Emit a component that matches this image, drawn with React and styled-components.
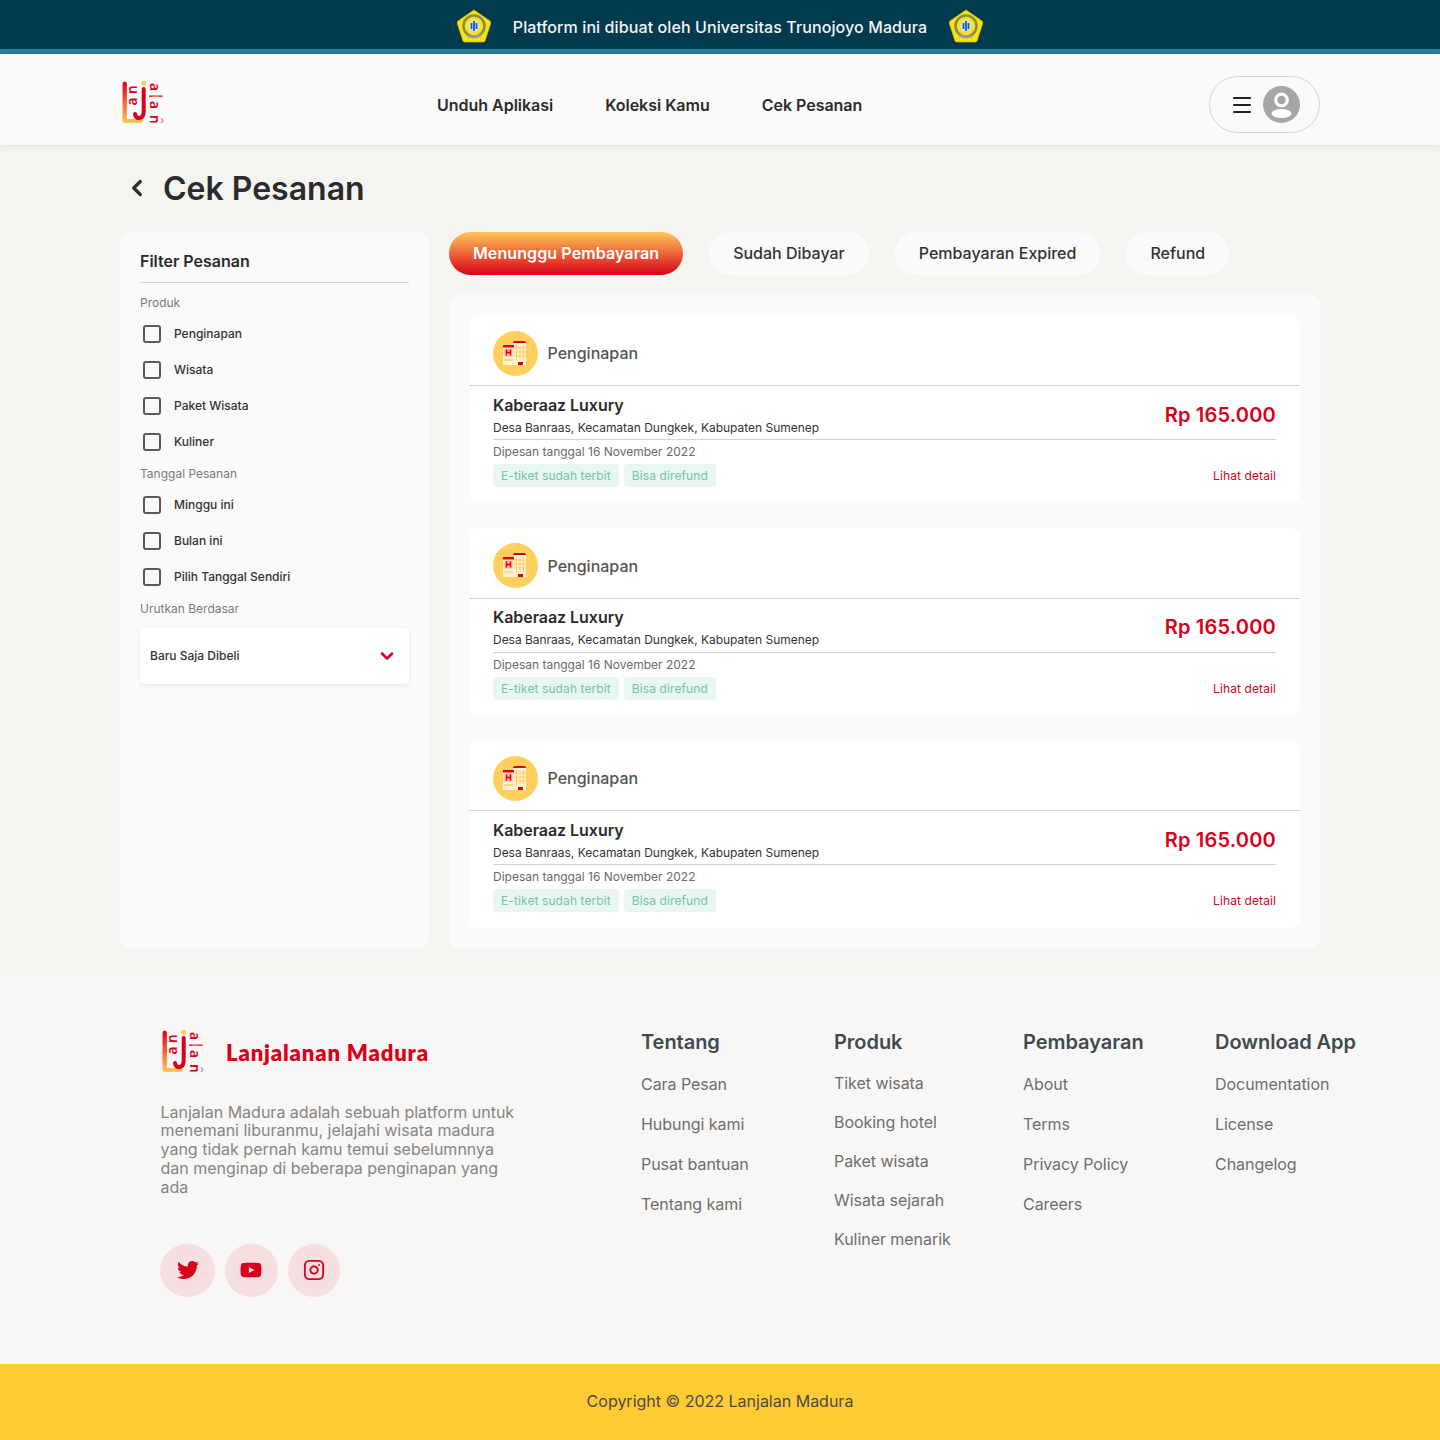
import styled, { createGlobalStyle } from 'styled-components';
import { Menu, ChevronLeft, ChevronDown } from 'lucide-react';
import { FaTwitter, FaYoutube } from 'react-icons/fa';
import { FiInstagram } from 'react-icons/fi';

const GlobalStyle = createGlobalStyle`
  * { box-sizing: border-box; }
  body {
    margin: 0;
    background: #f5f4f1;
    color: #2b2b2b;
    font-family: Inter, 'Liberation Sans', sans-serif;
  }
`;

const Banner = styled.div`
  display: flex;
  justify-content: center;
  align-items: center;
  gap: 21px;
  height: 54px;
  padding-top: 5px;
  background: #023a4e;
  border-bottom: 5px solid #22809c;
  color: #f5f5f5;
  font-size: 16px;
  font-weight: 500;
  letter-spacing: 0.1px;
`;

const Header = styled.header`
  display: flex;
  align-items: center;
  height: 91px;
  padding: 10px 120px 0;
  background: #fafafa;
  box-shadow: 0 1px 6px rgba(0, 0, 0, 0.08);
  position: relative;
`;

const LogoMark = styled.svg`
  flex: none;
  margin-top: ${(p) => p.$shift || 0}px;
`;

const Nav = styled.nav`
  display: flex;
  gap: 52px;
  margin-left: 271px;
  flex: 1;
  font-size: 16px;
  font-weight: 600;
  letter-spacing: -0.02px;
`;

const UserPill = styled.div`
  display: flex;
  align-items: center;
  gap: 9px;
  width: 111px;
  height: 57px;
  padding-left: 20px;
  border: 1px solid #d4d4d4;
  border-radius: 29px;
  color: #222;
`;

const Main = styled.main`
  padding: 24px 120px 29px;
`;

const TitleRow = styled.div`
  display: flex;
  align-items: center;
  gap: 13px;
  height: 38px;
  margin-bottom: 25px;
  padding-left: 4px;
  h1 {
    margin: 0;
    font-size: 32px;
    font-weight: 600;
  }
`;

const Columns = styled.div`
  display: grid;
  grid-template-columns: 309px 871px;
  gap: 20px;
`;

const Sidebar = styled.aside`
  height: 716px;
  padding: 19px 20px 20px;
  border-radius: 10px;
  background: #fafafa;
`;

const SideTitle = styled.h2`
  margin: 0 0 12px;
  padding-bottom: 10px;
  height: 32px;
  border-bottom: 1px solid #d4d4d4;
  font-size: 16px;
  line-height: 20px;
  font-weight: 600;
`;

const GroupLabel = styled.div`
  height: 16px;
  font-size: 12px;
  line-height: 16px;
  color: #7a7a7a;
`;

const CheckList = styled.div`
  display: flex;
  flex-direction: column;
  gap: 18px;
  margin: 13.5px 0 15.5px;
`;

const CheckRow = styled.label`
  display: flex;
  align-items: center;
  gap: 13px;
  height: 18px;
  padding-left: 3px;
  font-size: 12px;
  font-weight: 500;
  color: #333;
`;

const Box = styled.span`
  width: 18px;
  height: 18px;
  border: 2px solid #5f5753;
  border-radius: 3px;
`;

const Select = styled.div`
  display: flex;
  align-items: center;
  justify-content: space-between;
  height: 56px;
  margin-top: 10.5px;
  padding: 0 12px 0 10px;
  width: 269px;
  border-radius: 4px;
  background: #fff;
  box-shadow: 0 1px 5px rgba(0, 0, 0, 0.08);
  font-size: 12px;
  font-weight: 500;
  color: #d9001b;
  span { color: #333; }
`;

const Tabs = styled.div`
  display: flex;
  gap: 26px;
  margin-bottom: 20px;
`;

const Tab = styled.button`
  height: 43px;
  padding: 0 24px 2px;
  border: 0;
  border-radius: 22px;
  font-family: inherit;
  font-size: 16px;
  font-weight: ${(p) => (p.$active ? 600 : 500)};
  letter-spacing: ${(p) => (p.$active ? '0.1px' : '0')};
  color: ${(p) => (p.$active ? '#fff' : '#333')};
  background: ${(p) => (p.$active ? 'linear-gradient(180deg, #ffc857 0%, #d9001b 100%)' : '#fafafa')};
`;

const Panel = styled.section`
  display: flex;
  flex-direction: column;
  gap: 24.5px;
  height: 653px;
  padding: 20px;
  border-radius: 10px;
  background: #fafafa;
`;

const Card = styled.article`
  height: 188px;
  border-radius: 10px;
  background: #fff;
`;

const CardHead = styled.div`
  display: flex;
  align-items: center;
  gap: 9.5px;
  height: 71px;
  padding: 6px 24px 0;
  border-bottom: 1px solid #d4d4d4;
  font-size: 16px;
  font-weight: 500;
  color: #5a5250;
`;

const Circle = styled.div`
  display: flex;
  justify-content: center;
  align-items: center;
  width: 45px;
  height: 45px;
  border-radius: 50%;
  background: #ffd15c;
`;

const CardBody = styled.div`
  padding: 0 24px;
`;

const InfoRow = styled.div`
  display: flex;
  justify-content: space-between;
  align-items: center;
  height: 54px;
  padding-top: 4px;
  border-bottom: 1px solid #d4d4d4;
`;

const Name = styled.div`
  font-size: 16px;
  line-height: 20px;
  font-weight: 600;
  letter-spacing: -0.05px;
  margin-bottom: 5px;
`;

const Address = styled.div`
  font-size: 12px;
  line-height: 15px;
  letter-spacing: -0.02px;
  color: #333;
`;

const Price = styled.div`
  font-size: 20px;
  font-weight: 600;
  letter-spacing: 0.2px;
  color: #d9001b;
`;

const Ordered = styled.div`
  margin-top: 4px;
  font-size: 12px;
  line-height: 15px;
  color: #6a6a6a;
`;

const BadgeRow = styled.div`
  display: flex;
  align-items: center;
  gap: 5px;
  margin-top: 5px;
`;

const Badge = styled.span`
  height: 23px;
  padding: 0 8px;
  border-radius: 4px;
  background: #e9f6f2;
  color: #73c5a5;
  font-size: 12px;
  line-height: 23px;
  letter-spacing: 0.1px;
`;

const Detail = styled.a`
  margin-left: auto;
  font-size: 12px;
  letter-spacing: 0.1px;
  color: #d9001b;
`;

const Footer = styled.footer`
  display: flex;
  height: 387px;
  padding: 52px 0 0 160px;
  background: #f8f7f5;
`;

const Brand = styled.div`
  width: 481px;
`;

const BrandRow = styled.div`
  display: flex;
  align-items: center;
  gap: 20px;
  height: 46px;
  margin-bottom: 27.5px;
`;

const BrandName = styled.div`
  font-family: Lato, 'Noto Sans', sans-serif;
  font-size: 22px;
  font-weight: 800;
  letter-spacing: 0.85px;
  color: #d9001b;
`;

const About = styled.p`
  width: 360px;
  margin: 0 0 47.5px;
  padding-left: 0.5px;
  font-size: 16px;
  line-height: 18.75px;
  color: #858585;
`;

const Socials = styled.div`
  display: flex;
  gap: 10px;
`;

const Social = styled.div`
  display: flex;
  justify-content: center;
  align-items: center;
  width: ${(p) => p.$w || 52.5}px;
  height: 53px;
  border-radius: 50%;
  background: #f5dfe1;
  color: #d9001b;
  font-size: 22px;
`;

const LinkCol = styled.div`
  display: flex;
  flex-direction: column;
  width: ${(p) => p.$w}px;
  flex: none;
  gap: ${(p) => p.$gap || 21}px;
  font-size: 16px;
  line-height: 19px;
  letter-spacing: -0.05px;
  color: #6e6e6e;
  h3 {
    margin: 1px 0 0;
    height: 24px;
    font-size: 20px;
    line-height: 24px;
    font-weight: 600;
    letter-spacing: -0.04px;
    color: #3f4a4f;
    white-space: nowrap;
  }
`;

const Copy = styled.div`
  display: flex;
  justify-content: center;
  align-items: center;
  height: 76px;
  padding-bottom: 2px;
  background: #ffcb33;
  font-size: 16px;
  color: #4a4a4a;
`;

// university crest, simplified
const Crest = () => (
  <svg width="36" height="36" viewBox="0 0 36 36">
    <path d="M18 1 L34 12 Q35 13 34.500 15 L29 32 Q28.500 33 27 33 L9 33 Q7.500 33 7 32 L1.500 15 Q1 13 2 12 Z" fill="#f7e318" stroke="#d9b900" strokeWidth="0.8" />
    <circle cx="18" cy="17" r="10.500" fill="none" stroke="#8a8a4a" strokeWidth="2.500" />
    <circle cx="18" cy="17" r="6" fill="#cfe3ee" />
    <path d="M18 12 L18 22 M15.500 14 L15.500 20 M20.500 14 L20.500 20" stroke="#1d5f9a" strokeWidth="1.800" />
    <path d="M11 26 Q18 30 25 26" fill="none" stroke="#9a9a9a" strokeWidth="2.500" />
  </svg>
);

const logoFont = { fontFamily: "'Noto Sans', sans-serif", fontSize: 13.5, fontWeight: 600, fill: '#d9001b' };

const Logo = ({ id, shift }) => (
  <LogoMark width="46" height="46" viewBox="0 0 46 46" $shift={shift}>
    <defs>
      <linearGradient id={id} x1="0" y1="0" x2="0" y2="1">
        <stop offset="0" stopColor="#d9001b" />
        <stop offset="1" stopColor="#ffc857" />
      </linearGradient>
    </defs>
    <path d="M2.500 4 Q2.500 1.500 4.700 1.500 Q6.900 1.500 6.900 4 L6.900 39 L20.500 39 Q22.700 39 22.700 41 Q22.700 43 20.500 43 L5 43 Q2.500 43 2.500 40.500 Z" fill={`url(#${id})`} />
    <path d="M23.700 9 L23.700 31 Q23.700 38 19 38 Q15.500 38 15 34" fill="none" stroke="#d9001b" strokeWidth="4" strokeLinecap="round" />
    <circle cx="23.700" cy="3.300" r="2.500" fill="#ffc857" />
    <text transform="translate(17 14) rotate(-90)" {...logoFont}>n</text>
    <text transform="translate(17 25.500) rotate(-90)" {...logoFont}>a</text>
    <text transform="translate(30 3) rotate(90)" {...logoFont}>a</text>
    <rect x="29" y="15.500" width="13.500" height="1.300" fill="#d9001b" />
    <rect x="32" y="15.800" width="7" height="0.700" fill="#ffc857" />
    <text transform="translate(30 21) rotate(90)" {...logoFont}>a</text>
    <text transform="translate(30 35) rotate(90)" {...logoFont}>n</text>
    <path d="M41 38.500 L43 40.700 L41 43" fill="none" stroke="#d9001b" strokeWidth="0.800" />
  </LogoMark>
);

const Hotel = () => (
  <svg width="28" height="27" viewBox="0 0 28 27">
    <rect x="11" y="3" width="13" height="22" fill="#fff1d6" />
    <path d="M11 3 Q11 1 13 1 L22 1 Q24 1 24 3 Z" fill="#d9001b" />
    <rect x="1" y="7" width="11" height="18" fill="#fff1d6" />
    <rect x="1" y="5" width="11" height="2.500" fill="#d9001b" />
    <rect x="2.500" y="8.500" width="8" height="8" fill="#ffb48a" />
    <path d="M4.500 9.500 L4.500 15.500 M8.500 9.500 L8.500 15.500 M4.500 12.500 L8.500 12.500" stroke="#d9001b" strokeWidth="1.400" />
    <path d="M2 20 L11 20" stroke="#ffd15c" strokeWidth="1.500" />
    <rect x="16" y="22" width="5" height="3" fill="#d9001b" />
    <path d="M14.500 5 L14.500 20 M18 5 L18 20 M21.500 5 L21.500 20 M12 8 L24 8 M12 12 L24 12 M12 16 L24 16" stroke="#ffd15c" strokeWidth="1" />
  </svg>
);

const Avatar = () => (
  <svg width="37" height="37" viewBox="0 0 37 37">
    <circle cx="18.500" cy="18.500" r="18.500" fill="#a6a6a6" />
    <circle cx="18.500" cy="14" r="5.800" fill="none" stroke="#fff" strokeWidth="3.200" />
    <ellipse cx="18.500" cy="27.500" rx="10" ry="4.500" fill="#fff" />
  </svg>
);

const Group = ({ items }) => (
  <CheckList>
    {items.map((item) => (
      <CheckRow key={item}>
        <Box />
        {item}
      </CheckRow>
    ))}
  </CheckList>
);

const OrderCard = () => (
  <Card>
    <CardHead>
      <Circle>
        <Hotel />
      </Circle>
      Penginapan
    </CardHead>
    <CardBody>
      <InfoRow>
        <div>
          <Name>Kaberaaz Luxury</Name>
          <Address>Desa Banraas, Kecamatan Dungkek, Kabupaten Sumenep</Address>
        </div>
        <Price>Rp 165.000</Price>
      </InfoRow>
      <Ordered>Dipesan tanggal 16 November 2022</Ordered>
      <BadgeRow>
        <Badge>E-tiket sudah terbit</Badge>
        <Badge>Bisa direfund</Badge>
        <Detail>Lihat detail</Detail>
      </BadgeRow>
    </CardBody>
  </Card>
);

const footerCols = [
  { title: 'Tentang', w: 193, links: ['Cara Pesan', 'Hubungi kami', 'Pusat bantuan', 'Tentang kami'] },
  { title: 'Produk', w: 189, gap: 20, links: ['Tiket wisata', 'Booking hotel', 'Paket wisata', 'Wisata sejarah', 'Kuliner menarik'] },
  { title: 'Pembayaran', w: 192, links: ['About', 'Terms', 'Privacy Policy', 'Careers'] },
  { title: 'Download App', w: 160, links: ['Documentation', 'License', 'Changelog'] },
];

export default function App() {
  return (
    <>
      <GlobalStyle />
      <Banner>
        <Crest />
        Platform ini dibuat oleh Universitas Trunojoyo Madura
        <Crest />
      </Banner>
      <Header>
        <Logo id="logo-top" shift={-3} />
        <Nav>
          <span>Unduh Aplikasi</span>
          <span>Koleksi Kamu</span>
          <span>Cek Pesanan</span>
        </Nav>
        <UserPill>
          <Menu size={24} strokeWidth={2.2} />
          <Avatar />
        </UserPill>
      </Header>
      <Main>
        <TitleRow>
          <ChevronLeft size={26} strokeWidth={3} />
          <h1>Cek Pesanan</h1>
        </TitleRow>
        <Columns>
          <Sidebar>
            <SideTitle>Filter Pesanan</SideTitle>
            <GroupLabel>Produk</GroupLabel>
            <Group items={['Penginapan', 'Wisata', 'Paket Wisata', 'Kuliner']} />
            <GroupLabel>Tanggal Pesanan</GroupLabel>
            <Group items={['Minggu ini', 'Bulan ini', 'Pilih Tanggal Sendiri']} />
            <GroupLabel>Urutkan Berdasar</GroupLabel>
            <Select>
              <span>Baru Saja Dibeli</span>
              <ChevronDown size={20} strokeWidth={3} />
            </Select>
          </Sidebar>
          <div>
            <Tabs>
              <Tab $active>Menunggu Pembayaran</Tab>
              <Tab>Sudah Dibayar</Tab>
              <Tab>Pembayaran Expired</Tab>
              <Tab>Refund</Tab>
            </Tabs>
            <Panel>
              <OrderCard />
              <OrderCard />
              <OrderCard />
            </Panel>
          </div>
        </Columns>
      </Main>
      <Footer>
        <Brand>
          <BrandRow>
            <Logo id="logo-bottom" />
            <BrandName>Lanjalanan Madura</BrandName>
          </BrandRow>
          <About>
            Lanjalan Madura adalah sebuah platform untuk menemani liburanmu, jelajahi wisata madura yang tidak pernah kamu temui sebelumnnya dan menginap di beberapa penginapan yang ada
          </About>
          <Socials>
            <Social $w={55}><FaTwitter /></Social>
            <Social><FaYoutube /></Social>
            <Social><FiInstagram /></Social>
          </Socials>
        </Brand>
        {footerCols.map((col) => (
          <LinkCol key={col.title} $w={col.w} $gap={col.gap}>
            <h3>{col.title}</h3>
            {col.links.map((link) => (
              <span key={link}>{link}</span>
            ))}
          </LinkCol>
        ))}
      </Footer>
      <Copy>Copyright © 2022 Lanjalan Madura</Copy>
    </>
  );
}
